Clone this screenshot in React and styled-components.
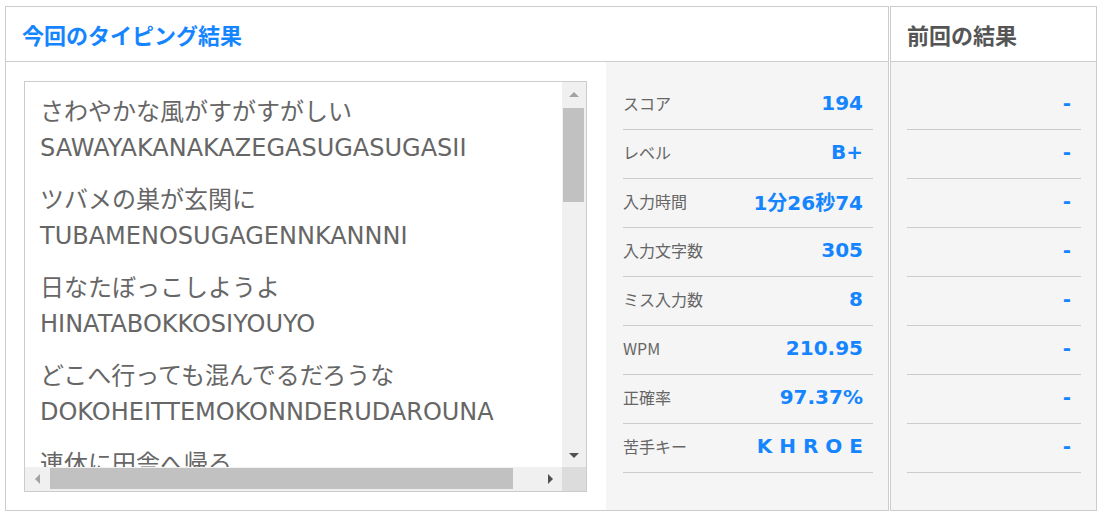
import React from 'react';
import styled, { createGlobalStyle } from 'styled-components';

const BLUE = '#1585ff';
const LINE = '#cccccc';

const GlobalStyle = createGlobalStyle`
  html, body {
    margin: 0;
    padding: 0;
    background: #ffffff;
  }
  body {
    font-family: "DejaVu Sans", "Noto Sans CJK JP", sans-serif;
    color: #666666;
  }
`;

const Page = styled.div`
  display: flex;
  gap: 1px;
  padding: 6px 5px 5px 5px;
  align-items: stretch;
`;

const Panel = styled.section`
  display: flex;
  flex-direction: column;
  width: ${(p) => p.width}px;
  height: 505px;
  box-sizing: border-box;
  border: 1px solid ${LINE};
`;

const Header = styled.header`
  height: 54px;
  flex-shrink: 0;
  display: flex;
  align-items: center;
  padding-left: ${(p) => p.pad}px;
  border-bottom: 1px solid ${LINE};
  background: #ffffff;
`;

const Title = styled.h2`
  margin: 0;
  font-family: "Noto Sans CJK JP", sans-serif;
  font-size: 22px;
  font-weight: 700;
  line-height: 26px;
  color: ${(p) => p.color};
`;

const Body = styled.div`
  flex: 1;
  display: flex;
  min-height: 0;
`;

const ScrollArea = styled.div`
  width: 600px;
  flex-shrink: 0;
  box-sizing: border-box;
  padding: 19px 19px 18px 18px;
  background: #ffffff;
`;

const ScrollBox = styled.div`
  height: 100%;
  box-sizing: border-box;
  border: 1px solid ${LINE};
  display: grid;
  grid-template-columns: 1fr 24px;
  grid-template-rows: 1fr 24px;
  background: #ffffff;
`;

const Viewport = styled.div`
  overflow: hidden;
  padding: 10px 15px 0 15px;
  min-height: 0;
`;

const Entry = styled.div`
  margin-bottom: 14px;
  white-space: nowrap;
`;

const Line = styled.div`
  font-size: 24px;
  line-height: 36px;
  padding-top: ${(p) => (p.latin ? 2 : 0)}px;
  color: #666666;
  font-family: ${(p) => (p.latin ? '"DejaVu Sans", "Noto Sans CJK JP", sans-serif' : '"Noto Sans CJK JP", sans-serif')};
`;

const VBar = styled.div`
  background: #f0f0f0;
  display: flex;
  flex-direction: column;
  align-items: center;
`;

const HBar = styled.div`
  background: #f0f0f0;
  display: flex;
  align-items: center;
`;

const Corner = styled.div`
  background: #dcdcdc;
`;

const ArrowCell = styled.div`
  width: 24px;
  height: 24px;
  flex-shrink: 0;
  display: flex;
  align-items: center;
  justify-content: center;
`;

const VThumbTrack = styled.div`
  flex: 1;
  width: 100%;
  padding: 2px 2px 0 1px;
  box-sizing: border-box;
`;

const VThumb = styled.div`
  height: 94px;
  background: #c1c1c1;
`;

const HThumbTrack = styled.div`
  flex: 1;
  height: 100%;
  padding: 1px 0 2px 1px;
  box-sizing: border-box;
  display: flex;
`;

const HThumb = styled.div`
  width: 463px;
  background: #c1c1c1;
`;

const Arrow = ({ dir, dark }) => {
  const color = dark ? '#505050' : '#a3a3a3';
  const pts = {
    up: '0,5 5,0 10,5',
    down: '0,0 10,0 5,5',
    left: '5,0 5,10 0,5',
    right: '0,0 0,10 5,5',
  }[dir];
  const vertical = dir === 'up' || dir === 'down';
  return (
    <ArrowCell>
      <svg width={vertical ? 10 : 5} height={vertical ? 5 : 10} viewBox={vertical ? '0 0 10 5' : '0 0 5 10'}>
        <polygon points={pts} fill={color} />
      </svg>
    </ArrowCell>
  );
};

const Stats = styled.div`
  flex: 1;
  background: #f5f5f5;
  padding: 19px ${(p) => p.right}px 0 ${(p) => p.left}px;
`;

const Row = styled.div`
  height: 49px;
  box-sizing: border-box;
  display: flex;
  align-items: center;
  justify-content: space-between;
  padding: 0 10px 4px 0;
  border-bottom: 1px solid ${LINE};
`;

const Label = styled.span`
  font-family: "Noto Sans CJK JP", sans-serif;
  font-size: 16px;
  color: #666666;
  margin-bottom: 1px;
`;

const Value = styled.span`
  font-family: "DejaVu Sans", "Noto Sans CJK JP", sans-serif;
  font-size: 20px;
  font-weight: 700;
  color: ${BLUE};
  white-space: pre;
  margin-left: auto;
`;

const entries = [
  ['さわやかな風がすがすがしい', 'SAWAYAKANAKAZEGASUGASUGASII'],
  ['ツバメの巣が玄関に', 'TUBAMENOSUGAGENNKANNNI'],
  ['日なたぼっこしようよ', 'HINATABOKKOSIYOUYO'],
  ['どこへ行っても混んでるだろうな', 'DOKOHEITTEMOKONNDERUDAROUNA'],
  ['連休に田舎へ帰る', 'RENNKYUUNIINAKAHEKAERU'],
];

const stats = [
  ['スコア', '194'],
  ['レベル', 'B+'],
  ['入力時間', '1分26秒74'],
  ['入力文字数', '305'],
  ['ミス入力数', '8'],
  ['WPM', '210.95'],
  ['正確率', '97.37%'],
  ['苦手キー', 'K H R O E'],
];

export default function App() {
  return (
    <>
      <GlobalStyle />
      <Page>
        <Panel width={884}>
          <Header pad={16}>
            <Title color={BLUE}>今回のタイピング結果</Title>
          </Header>
          <Body>
            <ScrollArea>
              <ScrollBox>
                <Viewport>
                  {entries.map(([jp, roma]) => (
                    <Entry key={roma}>
                      <Line>{jp}</Line>
                      <Line latin>{roma}</Line>
                    </Entry>
                  ))}
                </Viewport>
                <VBar>
                  <Arrow dir="up" />
                  <VThumbTrack>
                    <VThumb />
                  </VThumbTrack>
                  <Arrow dir="down" dark />
                </VBar>
                <HBar>
                  <Arrow dir="left" />
                  <HThumbTrack>
                    <HThumb />
                  </HThumbTrack>
                  <Arrow dir="right" dark />
                </HBar>
                <Corner />
              </ScrollBox>
            </ScrollArea>
            <Stats left={17} right={15}>
              {stats.map(([label, value]) => (
                <Row key={label}>
                  <Label>{label}</Label>
                  <Value>{value}</Value>
                </Row>
              ))}
            </Stats>
          </Body>
        </Panel>
        <Panel width={207}>
          <Header pad={16}>
            <Title color="#555555">前回の結果</Title>
          </Header>
          <Body>
            <Stats left={16} right={15}>
              {stats.map(([label]) => (
                <Row key={label}>
                  <Value>-</Value>
                </Row>
              ))}
            </Stats>
          </Body>
        </Panel>
      </Page>
    </>
  );
}
